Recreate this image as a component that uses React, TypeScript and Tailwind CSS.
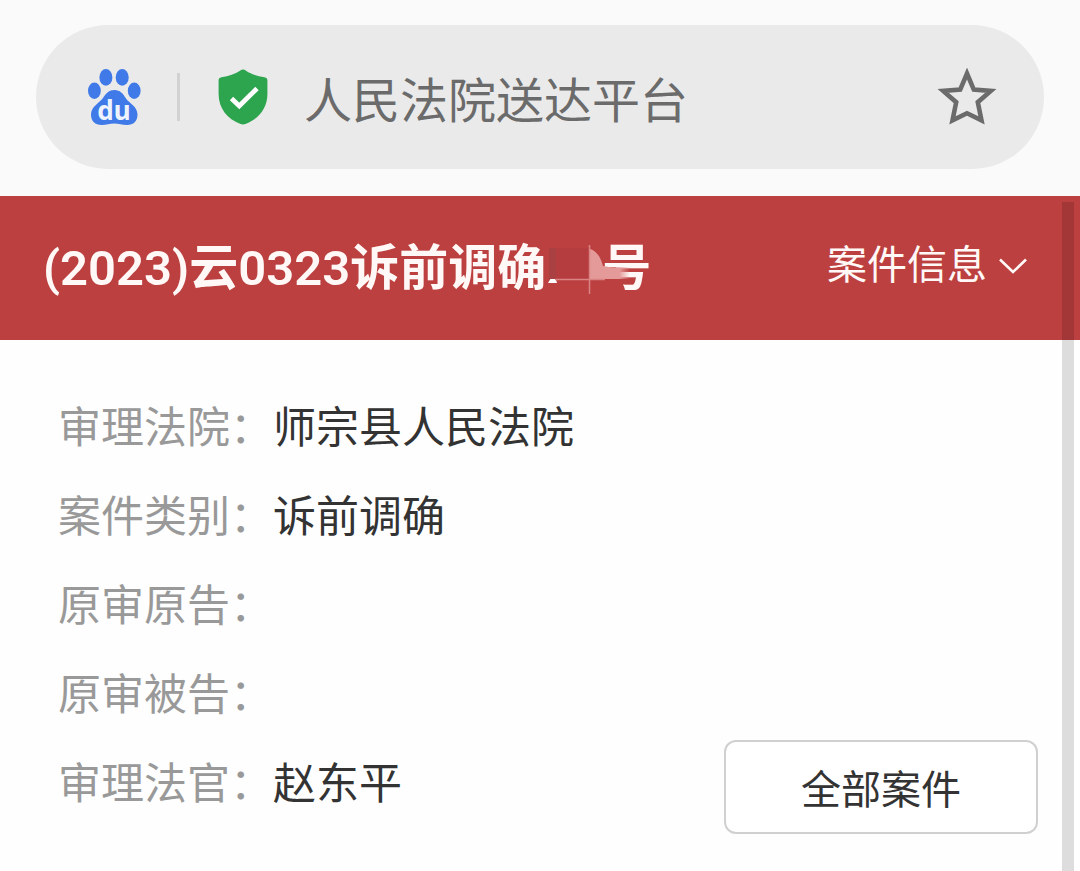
import type { ReactNode } from "react";

const caseFields = [
  { label: "审理法院", value: "师宗县人民法院" },
  { label: "案件类别", value: "诉前调确" },
  { label: "原审原告", value: "" },
  { label: "原审被告", value: "" },
  { label: "审理法官", value: "赵东平" }
];

function PawLogo() {
  return (
    <svg viewBox="0 0 54 58" className="h-[58px] w-[54px] shrink-0" aria-hidden="true">
      <g fill="#3f7ae8">
        <ellipse cx="7.4" cy="22.8" rx="6.4" ry="8.2" />
        <ellipse cx="18.9" cy="9.4" rx="6.5" ry="8.4" />
        <ellipse cx="35.2" cy="9.4" rx="6.5" ry="8.4" />
        <ellipse cx="47.2" cy="22.8" rx="6.4" ry="8.2" />
        <path d="M27.5 22c5.5 0 8.500 3.500 11.500 8.500 3 4.500 11.500 8 11.500 16 0 6.500-4 10.500-10.500 10.500-5 0-8-1.600-12.800-1.600S19.500 57 14.800 57C8 57 4 53 4 46.500c0-8 8.500-11.500 12-16.500 3-4.500 6-8 11.500-8z" />
      </g>
      <text x="27" y="51.500" textAnchor="middle" fontSize="26" fill="#eef3fd" className="font-['Noto_Sans',sans-serif] font-bold">
        du
      </text>
    </svg>
  );
}

function ShieldIcon() {
  return (
    <svg viewBox="0 0 50 56" className="h-14 w-[50px] shrink-0" aria-hidden="true">
      <path
        d="M25 0.500c1 0 2 .5 3 1.200C33 5 39 7 46.500 8.200c2 .4 2.900 1.500 2.900 3.300V25c0 14-8.500 25-21.900 30-1.700.6-3.300.6-5 0C9.100 50 .6 39 .6 25V11.500c0-1.800.9-2.900 2.900-3.300C11 7 17 5 22 1.700c1-.7 2-1.200 3-1.200z"
        fill="#2da44e"
      />
      <path d="M13.500 29.500l7.800 7.500L39 19.500" fill="none" stroke="#fff" strokeWidth="4.800" />
    </svg>
  );
}

function StarIcon() {
  return (
    <svg viewBox="0 0 60 58" className="h-[58px] w-[60px]" aria-hidden="true">
      <path
        d="M30 5.500l6.800 16.100 17 1.300-13 11.300 3.700 18.200L30 45.300l-14.500 7.100 3.700-18.200-13-11.300 17-1.300z"
        fill="none"
        stroke="#6b6b6b"
        strokeWidth="4.600"
      />
    </svg>
  );
}

// Smudge that hides the serial number of the case, it runs over the left edge of the next character
function Redaction() {
  return (
    <svg viewBox="0 0 56 56" className="relative h-14 w-14 shrink-0 overflow-visible" aria-hidden="true">
      <defs>
        <linearGradient id="smudge" x1="0" x2="1">
          <stop offset="0" stopColor="#e39a99" />
          <stop offset="0.750" stopColor="#e39a99" />
          <stop offset="1" stopColor="#e39a99" stopOpacity="0.100" />
        </linearGradient>
      </defs>
      <path d="M2 42l6-10 3 10z" fill="#fff" />
      <rect x="3" y="7" width="10" height="31" fill="#a94142" />
      <rect x="10" y="7" width="34" height="31" fill="#b53d40" />
      <path d="M56 26h14v12H56z" fill="#bc4040" />
      <path d="M44 8c7 2 11 9 13 17 8 2 17 1 26 1v12H44z" fill="url(#smudge)" />
      <path d="M9 38.500h50M43.500 4v49" stroke="#d98383" strokeWidth="1.500" />
    </svg>
  );
}

function AddressBar() {
  return (
    <header className="bg-[#fafafa] px-9 pt-[25px] pb-[27px]">
      <div className="flex h-36 items-center rounded-full bg-[#eaeaea] pr-[47px] pl-[51px]">
        <PawLogo />
        <span className="ml-9 h-12 w-[3px] shrink-0 bg-[#d2d2d2]" />
        <span className="ml-[38px]">
          <ShieldIcon />
        </span>
        <input
          type="text"
          aria-label="网址"
          defaultValue="人民法院送达平台"
          className="ml-9 h-20 min-w-0 flex-1 bg-transparent text-[48px] text-[#6b6b6b] outline-none"
        />
        <button type="button" aria-label="收藏">
          <StarIcon />
        </button>
      </div>
    </header>
  );
}

function CaseHeader({ children }: { children: ReactNode }) {
  return (
    <div className="flex h-36 items-center justify-between bg-[#bc4040] pr-[53px] pl-[43px] text-[#fff8f6]">
      <h1 className="flex items-center pt-0.5 text-[49px] leading-[64px] font-semibold whitespace-nowrap">{children}</h1>
      <button type="button" className="flex items-center gap-3 pb-1 text-[40px] leading-[56px]">
        案件信息
        <svg viewBox="0 0 28 16" className="h-4 w-7" fill="none" stroke="currentColor" strokeWidth="2.600" aria-hidden="true">
          <path d="M1 1.500l13 12.500L27 1.500" />
        </svg>
      </button>
    </div>
  );
}

export default function App() {
  return (
    <div className="flex min-h-screen flex-col bg-[#fefefe] font-[Roboto,'Noto_Sans_CJK_SC',sans-serif]">
      <AddressBar />
      <main className="relative flex-1">
        <CaseHeader>
          <span>(2023)云0323诉前调确</span>
          <Redaction />
          <span>号</span>
        </CaseHeader>
        <div className="flex items-end justify-between pt-11 pr-[42px] pb-[37px] pl-[58px]">
          <dl className="pb-[5px] text-[43px] leading-[89px]">
            {caseFields.map(({ label, value }) => (
              <div key={label} className="flex">
                <dt className="text-[#999]">{label}：</dt>
                <dd className="text-[#333]">{value}</dd>
              </div>
            ))}
          </dl>
          <button
            type="button"
            className="h-[94px] w-[314px] rounded-xl border-2 border-[#d0d0d0] bg-white pt-2 text-[40px] text-[#333]"
          >
            全部案件
          </button>
        </div>
        <div className="absolute top-1.5 right-1.5 bottom-0 w-3 bg-black/13" />
      </main>
    </div>
  );
}
